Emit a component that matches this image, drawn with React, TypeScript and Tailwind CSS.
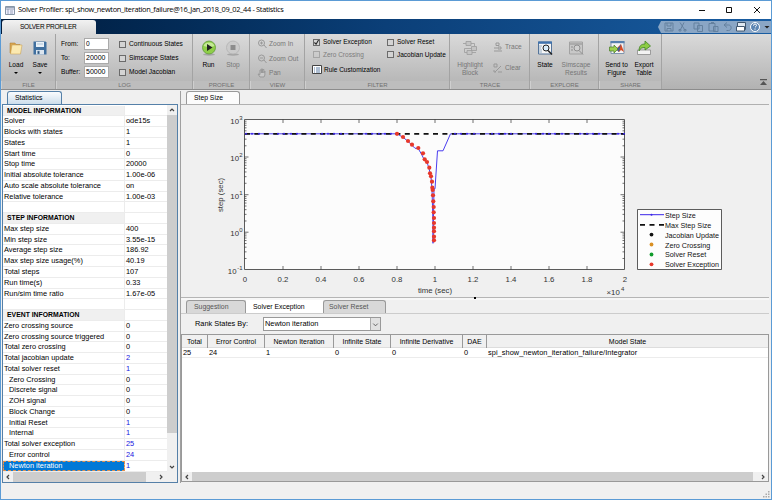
import type { ReactNode } from "react";

const modelRows: string[][] = [
  ["#MODEL INFORMATION", ""],
  ["Solver", "ode15s"],
  ["Blocks with states", "1"],
  ["States", "1"],
  ["Start time", "0"],
  ["Stop time", "20000"],
  ["Initial absolute tolerance", "1.00e-06"],
  ["Auto scale absolute tolerance", "on"],
  ["Relative tolerance", "1.00e-03"],
  ["", ""],
  ["#STEP INFORMATION", ""],
  ["Max step size", "400"],
  ["Min step size", "3.55e-15"],
  ["Average step size", "186.92"],
  ["Max step size usage(%)", "40.19"],
  ["Total steps", "107"],
  ["Run time(s)", "0.33"],
  ["Run/sim time ratio", "1.67e-05"],
  ["", ""],
  ["#EVENT INFORMATION", ""],
  ["Zero crossing source", "0"],
  ["Zero crossing source triggered", "0"],
  ["Total zero crossing", "0"],
  ["Total jacobian update", "2"],
  ["Total solver reset", "1"],
  [">Zero Crossing", "0"],
  [">Discrete signal", "0"],
  [">ZOH signal", "0"],
  [">Block Change", "0"],
  [">Initial Reset", "1"],
  [">Internal", "1"],
  ["Total solver exception", "25"],
  [">Error control", "24"],
  [">Newton iteration", "1"],
];

const exceptions = [
  [397, 133.8], [403, 137], [408, 141], [412, 144.7], [418.3, 148], [423, 153.3],
  [424.7, 159.3], [427, 162], [429.3, 167.7], [430, 173.3], [431, 176.3], [432, 181.7],
  [432.3, 187.7], [432.7, 190], [433, 195.3], [433.3, 201.3], [433.7, 207], [433.7, 212.3],
  [434, 218], [434, 223], [434, 227.7], [434, 231.3], [434, 236.7], [434, 240.3],
];

const stepMarks = [246, 252, 259, 278, 284, 291, 297, 322, 328, 334, 341, 366, 372, 379, 385, 391, 455, 461, 467, 474, 492, 499, 505, 511, 536, 543, 549, 555, 562, 580, 587, 593, 599, 618, 624];

function Section({ width, label, children }: { width: string; label: string; children?: ReactNode }) {
  return (
    <div className={`${width} shrink-0 flex flex-col border-r border-[#a3a3a3]`}>
      <div className="h-[46px] flex">{children}</div>
      <div className="h-[8px] mt-px bg-[#bdbdbd] border-l border-[#cfcfcf] text-center text-[6px] leading-[8px] text-[#707070]">
        {label}
      </div>
    </div>
  );
}

function Check({ label, on, off }: { label: string; on?: boolean; off?: boolean }) {
  return (
    <div className={`flex items-center gap-[3px] h-full ${off ? "text-[#7c7c7c]" : ""}`}>
      <span className={`w-[7px] h-[7px] border shrink-0 ${off ? "border-[#a5a5a5]" : "border-[#6b6b6b] bg-[#d4d4d4]"}`}>
        {on && (
          <svg viewBox="0 0 6 6" className="w-[5px] h-[5px]" fill="none" stroke="#222" strokeWidth="1.3">
            <path d="M.5 3l2 2 3-5" />
          </svg>
        )}
      </span>
      {label}
    </div>
  );
}

function BigButton({ width, icon, label, arrow, off }: { width: string; icon: ReactNode; label: string[]; arrow?: boolean; off?: boolean }) {
  return (
    <div className={`${width} shrink-0 flex flex-col items-center pt-[6px] ${off ? "text-[#777]" : ""}`}>
      <svg viewBox="0 0 16 16" className="w-[16px] h-[16px] mb-[5px] shrink-0">{icon}</svg>
      {label.map((l) => (
        <span key={l} className="leading-[8px] whitespace-nowrap">{l}</span>
      ))}
      {arrow && <span className="mt-[3px] border-x-[2.5px] border-t-[2.5px] border-x-transparent border-t-black" />}
    </div>
  );
}

function SmallButton({ icon, label }: { icon: ReactNode; label: string }) {
  return (
    <div className="flex items-center gap-[2px] text-[#777]">
      <svg viewBox="0 0 10 10" className="w-[10px] h-[10px]" fill="none" stroke="#999" strokeWidth="1">{icon}</svg>
      {label}
    </div>
  );
}

const folderIcon = (
  <>
    <path d="M2 3h5l1 1.5h4V13H2z" fill="#d9a651" stroke="#a8792c" strokeWidth=".5" />
    <path d="M4 5h10l-1.5 9H2.5z" fill="#fbe9b0" stroke="#c59a4a" strokeWidth=".5" />
  </>
);

const saveIcon = (
  <>
    <path d="M1.500 1.500h12l1 1v12h-13z" fill="#3f6f9f" />
    <path d="M4 2h8v5H4z" fill="#e9f1f8" />
    <path d="M4 10h8v4.500H4z" fill="#dce5ee" />
    <path d="M5.500 11h2v3h-2zM5 4h6" fill="#2c5179" stroke="#8aa7c3" strokeWidth=".6" />
  </>
);

const runIcon = (
  <>
    <ellipse cx="8" cy="14.500" rx="6" ry="1.200" fill="#8c8c8c" opacity=".6" />
    <circle cx="8" cy="7.500" r="6.500" fill="#8fce48" stroke="#5f9c38" strokeWidth=".8" />
    <path d="M2.500 6a5.800 5 0 0 1 11 0q-5 2-11 0z" fill="#d2f0aa" opacity=".8" />
    <path d="M6 4l5.500 3.500L6 11z" fill="#222" />
  </>
);

const stopIcon = (
  <>
    <ellipse cx="8" cy="14.500" rx="6" ry="1.200" fill="#a5a5a5" />
    <circle cx="8" cy="7.500" r="6.500" fill="#cbcbcb" stroke="#b2b2b2" strokeWidth=".8" />
    <path d="M5.500 5h5v5h-5z" fill="#8c8c8c" />
  </>
);

const highlightIcon = (
  <g fill="#c4c4c4" stroke="#9c9c9c" strokeWidth=".8">
    <path d="M1 3.500h3M9 3.500h3.500V6M9 12.500h5M2.500 8.500h7M2.500 8.500v4H5" fill="none" />
    <path d="M4 1.500h5v4H4zM9.500 6.500h5v4h-5zM5 10.500h5v4H5z" />
  </g>
);

const stateIcon = (
  <>
    <path d="M1.500 2h13v12h-13z" fill="#f6f6f6" stroke="#54749a" />
    <path d="M1 1.500h14v2.300H1z" fill="#3f72ad" />
    <path d="M2 6h3M2 8h2M2 10h3M2 12h3" stroke="#6f8fb0" strokeWidth=".7" />
    <circle cx="9" cy="8" r="3" fill="#d8ecfa" stroke="#222" />
    <path d="M11 10.500l4 4" stroke="#222" strokeWidth="1.600" />
  </>
);

const resultsIcon = (
  <>
    <path d="M1.500 2h13v12h-13z" fill="#c8c8c8" stroke="#a2a2a2" />
    <circle cx="9" cy="8" r="3" fill="#d0d0d0" stroke="#8f8f8f" />
    <path d="M11 10.500l4 4M2 4h12M3 7h2M3 10h2" stroke="#8f8f8f" />
  </>
);

const figureIcon = (
  <>
    <path d="M2 1.500h13v12H2z" fill="#f4f4f4" stroke="#8095ad" />
    <path d="M1.500 1h14v2.200h-14z" fill="#557fae" />
    <path d="M7 9l5-5 3 8-3-2-2 2z" fill="#d84b24" />
    <path d="M7 9l3-2 2-3-2 8z" fill="#3b5f9b" />
    <path d="M.5 7H5V5l4 4-4 4v-2H.500z" fill="#9dcf52" stroke="#467d24" strokeWidth=".7" />
  </>
);

const exportIcon = (
  <>
    <path d="M1.500 10h13v4.500h-13z" fill="#f3f3f3" stroke="#8a8a8a" strokeWidth=".8" />
    <path d="M3 11C3 6 5 4 9 4V1l5.500 5L9 10V7.500C6 7.500 4.500 8 3 11z" fill="#8dcc45" stroke="#3f8126" strokeWidth=".8" />
  </>
);

function QuickAccess() {
  return (
    <svg viewBox="0 0 114 14" className="w-[114px] h-[14px] shrink-0">
      <path d="M4 1h110v12H4L1 7z" fill="#8aa6c5" />
      <g fill="none" stroke="#64819f" strokeWidth="1">
        <path d="M8 3h8v8H8zM10 3v3h4V3M10 11V8.500h4V11" />
        <path d="M27 2.500l-3.500 7M23 2.500l4.500 7M22 9.500h2v1.500h-2zM27 9.500h2v1.500h-2z" />
        <path d="M37 3h5v6h-5zM40.500 5.500h5v6h-5z" />
        <path d="M52 3.500h6v7.500H52zM54 2.500h3M56.500 6.500h4.500v5h-4.500z" />
        <path d="M70 2.500l-3 2.500 3 2.500M67 5h4.500c3.500 0 3.500 5.500 0 5.500h-2" />
      </g>
      <path d="M80.500 2.500h8v7h-8z" fill="#dfe8f1" stroke="#41576f" />
      <path d="M79.500 6.500h8v4.500h-8z" fill="#fff" stroke="#41576f" />
      <circle cx="98" cy="7" r="4.500" fill="#5d86b3" stroke="#fff" />
      <path d="M96.500 5.700q0-1.700 1.500-1.700t1.500 1.400q0 .8-1.500 1.900M98 8.500v1.200" fill="none" stroke="#fff" strokeWidth="1" />
      <path d="M107.500 6h5l-2.500 2.500z" fill="#222" />
    </svg>
  );
}

function Toolstrip() {
  return (
    <div className="h-[56px] flex text-[6.600px] bg-linear-to-b from-[#dadada] to-[#b2b2b2] border-b border-[#8c8c8c]">
      <Section width="w-[55px]" label="FILE">
        <BigButton width="w-[30px]" icon={folderIcon} label={["Load"]} arrow />
        <BigButton width="w-[18px]" icon={saveIcon} label={["Save"]} arrow />
      </Section>
      <Section width="w-[137px]" label="LOG">
        <div className="grid grid-cols-[23px_35px_1fr] auto-rows-[14px] items-center pt-[3px] pl-[5px] h-[45px]">
          <span>From:</span>
          <span className="w-[25px] h-[12px] bg-white border border-[#aaa] leading-[10px] pl-px">0</span>
          <Check label="Continuous States" />
          <span>To:</span>
          <span className="w-[25px] h-[12px] bg-white border border-[#aaa] leading-[10px] pl-px text-[7px]">20000</span>
          <Check label="Simscape States" />
          <span>Buffer:</span>
          <span className="w-[25px] h-[12px] bg-white border border-[#aaa] leading-[10px] pl-px text-[7px]">50000</span>
          <Check label="Model Jacobian" />
        </div>
      </Section>
      <Section width="w-[57px]" label="PROFILE">
        <BigButton width="w-[31px]" icon={runIcon} label={["Run"]} />
        <BigButton width="w-[18px]" icon={stopIcon} label={["Stop"]} off />
      </Section>
      <Section width="w-[55px]" label="VIEW">
        <div className="flex flex-col gap-[4.500px] pt-[5px] pl-[7px]">
          <SmallButton label="Zoom In" icon={<path d="M7.500 4a3 3 0 1 1-6 0 3 3 0 1 1 6 0M7 6l2.500 3M3 4h3M4.500 2.500v3" />} />
          <SmallButton label="Zoom Out" icon={<path d="M7.500 4a3 3 0 1 1-6 0 3 3 0 1 1 6 0M7 6l2.500 3M3 4h3" />} />
          <SmallButton label="Pan" icon={<path d="M3 9L1 6l2 .5V2h1.300v3V1h1.300v4V1.500h1.300V5l1-2v4L7 9z" fill="#c8c8c8" />} />
        </div>
      </Section>
      <Section width="w-[145px]" label="FILTER">
        <div className="pl-[8px] pt-[2px] text-[6.500px]">
          <div className="grid grid-cols-[74px_1fr] auto-rows-[12.500px]">
            <Check label="Solver Exception" on />
            <Check label="Solver Reset" />
            <Check label="Zero Crossing" off />
            <Check label="Jacobian Update" />
          </div>
          <div className="flex items-center gap-[2px] -ml-px mt-px h-[15px]">
            <svg viewBox="0 0 10 9" className="w-[10px] h-[9px]">
              <path d="M.5.5h9v8h-9z" fill="#fff" stroke="#444" />
              <path d="M2 3h1M4 3h4M2 5h1M4 5h4M2 7h1M4 7h4" stroke="#355e91" strokeWidth=".8" />
            </svg>
            Rule Customization
          </div>
        </div>
      </Section>
      <Section width="w-[80px]" label="TRACE">
        <BigButton width="w-[40px]" icon={highlightIcon} label={["Highlight", "Block"]} off />
        <div className="flex flex-col gap-[11px] pt-[8px] pl-[3px]">
          <SmallButton label="Trace" icon={<path d="M3 1h3v2.500H3zM5 5h3v2H5zM1 6h3M1 9h8" />} />
          <SmallButton label="Clear" icon={<path d="M1 1h3v3H1zM2 9l6-6M5 9h4M1 7v2h2" />} />
        </div>
      </Section>
      <Section width="w-[69px]" label="EXPLORE">
        <BigButton width="w-[30px]" icon={stateIcon} label={["State"]} />
        <BigButton width="w-[32px]" icon={resultsIcon} label={["Simscape", "Results"]} off />
      </Section>
      <Section width="w-[63px]" label="SHARE">
        <BigButton width="w-[35px]" icon={figureIcon} label={["Send to", "Figure"]} />
        <BigButton width="w-[20px]" icon={exportIcon} label={["Export", "Table"]} />
      </Section>
      <div className="flex-1 flex items-end justify-end pr-[4px] pb-[4px]">
        <svg viewBox="0 0 7 6" className="w-[7px] h-[6px]">
          <path d="M0 0h7v1.200H0zM3.500 2L7 6H0z" fill="#555" />
        </svg>
      </div>
    </div>
  );
}

function Arrow({ d }: { d: string }) {
  return (
    <svg viewBox="0 0 10 10" className="w-[10px] h-[10px] shrink-0 bg-[#f0f0f0]" fill="none" stroke="#444" strokeWidth="1.200">
      <path d={d} />
    </svg>
  );
}

const arrows = {
  up: "M3 6l2-2 2 2",
  down: "M3 4l2 2 2-2",
  left: "M6 3L4 5l2 2",
  right: "M4 3l2 2-2 2",
};

function Statistics() {
  return (
    <div className="w-[177px] flex flex-col pl-px shrink-0">
      <div className="h-[13px] pl-[5px]">
        <div className="w-[55px] h-[14px] border border-b-0 border-[#5580a8] rounded-t-[3px] bg-linear-to-b from-[#fafcfe] to-[#c9dbea] pl-[7px] text-[6.900px] leading-[12px]">
          Statistics
        </div>
      </div>
      <div className="h-[379px] border border-[#5580a8] bg-white flex flex-col">
        <div className="h-[367px] flex">
          <div className="w-[164px] text-[7.400px] pt-[.5px]">
            {modelRows.map(([name, value], i) => {
              const head = name[0] === "#";
              const sub = name[0] === ">";
              const selected = i === modelRows.length - 1;
              const blue = i > 22 && value !== "0";
              return (
                <div key={i} className="h-[10.780px] leading-[10.780px] flex border-b border-[#ececec] whitespace-nowrap">
                  <span
                    className={`w-[122px] shrink-0 border-r border-[#ececec] ${
                      head ? "bg-[#f0f0f0] font-bold text-[6.850px] pl-[4px]" : sub ? "pl-[6px]" : "pl-px"
                    } ${selected ? "bg-[#0078d7] text-white outline-1 outline-dashed -outline-offset-1 outline-[#e09050]" : ""}`}
                  >
                    {name.replace(/^[#>]/, "")}
                  </span>
                  <span className={`pl-px ${blue ? "text-[#1515e0]" : ""}`}>{value}</span>
                </div>
              );
            })}
          </div>
          <div className="w-[10px] bg-[#cdcdcd] flex flex-col shrink-0">
            <Arrow d={arrows.up} />
            <div className="flex-1" />
            <div className="h-[29px] bg-[#f0f0f0]" />
            <Arrow d={arrows.down} />
          </div>
        </div>
        <div className="h-[10px] flex bg-[#f0f0f0]">
          <Arrow d={arrows.left} />
          <div className="w-[133px] bg-[#cdcdcd]" />
          <div className="w-[10px]" />
          <Arrow d={arrows.right} />
        </div>
      </div>
    </div>
  );
}

const decades = [119.5, 157, 194.7, 232.2];

function StepChart() {
  const minors = decades.flatMap((top) => [2, 3, 4, 5, 6, 7, 8, 9].map((n) => top + 37.6 * (1 - Math.log10(n))));
  return (
    <svg viewBox="181 105 587 192" className="w-[587px] h-[192px] font-['Liberation_Sans'] text-[7.800px]" fill="#333">
      <path d="M244.500 119.500h380V269.500h-380z" fill="#fcfcfc" stroke="#333" strokeWidth=".8" />
      <g stroke="#333" strokeWidth=".7">
        {[283, 321, 359, 397, 435, 473, 511, 549, 587].map((x) => (
          <path key={x} d={`M${x} 119.500v3.500M${x} 269.500v-3.500`} />
        ))}
        {decades.slice(1).map((y) => (
          <path key={y} d={`M244.500 ${y}h4M624.500 ${y}h-4`} />
        ))}
        {minors.map((y) => (
          <path key={y} d={`M244.500 ${y}h2M624.500 ${y}h-2`} />
        ))}
      </g>
      <path
        d="M245 133.800H397l6 3.500 5 4 4 4 3 3h3l3 5 3 6 3 3 2 6 2 9 1 12 1 35v19l1-54.500h1l2.500-38h5.500l7.500-17H625"
        fill="none"
        stroke="#4a3df0"
        strokeWidth="1"
      />
      <path d="M245 133.800H625" stroke="#111" strokeWidth="1.700" strokeDasharray="5 4.400" />
      {stepMarks.map((x) => (
        <circle key={x} cx={x} cy="133.800" r="1" fill="#3a25e8" />
      ))}
      {exceptions.map(([x, y], i) => (
        <circle key={i} cx={x} cy={y} r="2.100" fill="#e8382a" />
      ))}
      <g textAnchor="end">
        {[3, 2, 1, 0].map((p, i) => (
          <g key={p}>
            <text x="239" y={123.500 + i * 37.600}>10</text>
            <text x="242.500" y={119.500 + i * 37.600} className="text-[6px]">{p}</text>
          </g>
        ))}
        <text x="236.500" y="274">10</text>
        <text x="242.500" y="270" className="text-[6px]">-1</text>
      </g>
      <g textAnchor="middle">
        {["0", "0.2", "0.4", "0.6", "0.8", "1", "1.2", "1.4", "1.6", "1.8", "2"].map((l, i) => (
          <text key={l} x={245 + i * 38} y="281.500">{l}</text>
        ))}
        <text x="435" y="293">time (sec)</text>
        <text transform="translate(223 195) rotate(-90)">step (sec)</text>
      </g>
      <text x="606.500" y="295">×10</text>
      <text x="621" y="291" className="text-[6px]">4</text>
      <path d="M637.500 209.500h84v60h-84z" fill="#fdfdfd" stroke="#333" strokeWidth=".8" />
      <path d="M640 214.700h24" stroke="#3a25e8" />
      <circle cx="651.500" cy="214.700" r="1" fill="#3a25e8" />
      <path d="M640 224.800h24" stroke="#111" strokeWidth="1.700" strokeDasharray="5 4.500" />
      <circle cx="651.500" cy="234.600" r="1.900" fill="#111" />
      <circle cx="651.500" cy="244.500" r="1.900" fill="#d99024" />
      <circle cx="651.500" cy="254.500" r="1.900" fill="#119c2c" />
      <circle cx="651.500" cy="264.300" r="1.900" fill="#e8382a" />
      <g className="text-[7.200px]" fill="#111">
        {["Step Size", "Max Step Size", "Jacobian Update", "Zero Crossing", "Solver Reset", "Solver Exception"].map((l, i) => (
          <text key={l} x="665" y={217.800 + i * 9.900}>{l}</text>
        ))}
      </g>
    </svg>
  );
}

function ExceptionTable() {
  const cols = "grid grid-cols-[26px_57px_69px_57px_72px_24px_1fr]";
  return (
    <div className="h-[148px] border border-[#999] bg-white flex flex-col">
      <div className={`${cols} h-[13px] bg-[#f0f0f0] text-center text-[7px] leading-[13px] border-b border-[#ddd]`}>
        {["Total", "Error Control", "Newton Iteration", "Infinite State", "Infinite Derivative", "DAE", "Model State"].map((h, i) => (
          <span key={h} className={i < 6 ? "border-r border-[#999]" : ""}>{h}</span>
        ))}
      </div>
      <div className={`${cols} h-[10px] text-[7.400px] leading-[9px] border-b border-[#ececec]`}>
        {["25", "24", "1", "0", "0", "0", "spi_show_newton_iteration_failure/Integrator"].map((v, i) => (
          <span key={i} className={`pl-px ${i === 6 ? "tracking-[0.05px]" : ""}`}>{v}</span>
        ))}
      </div>
      <div className="flex-1" />
      <div className="h-[9px] flex bg-[#f0f0f0] overflow-hidden">
        <Arrow d={arrows.left} />
        <div className="flex-1 bg-[#cdcdcd]" />
        <div className="w-[5px]" />
        <Arrow d={arrows.right} />
      </div>
    </div>
  );
}

function Results() {
  return (
    <div className="flex-1 flex flex-col border-l border-[#a0a0a0] ml-[2px] mr-[2px]">
      <div className="h-[14px] pl-[5px] flex border-b border-[#b0b0b0]">
        <div className="w-[54px] h-[13px] border border-b-0 border-[#999] rounded-t-[3px] bg-[#fcfcfc] pl-[7px] text-[6.800px] leading-[12px]">
          Step Size
        </div>
      </div>
      <StepChart />
      <div className="h-[3px] border-t border-[#b5b5b5] bg-[#f7f7f7]">
        <div className="w-[2px] h-[2px] bg-black ml-[293px] -mt-px" />
      </div>
      <div className="h-[14px] pl-[5px] flex border-b border-[#ccc] text-[6.900px] leading-[12px]">
        <div className="w-[60px] border border-b-0 border-[#999] rounded-t-[3px] bg-[#d8d8d8] pl-[7px] text-[#555]">Suggestion</div>
        <div className="w-[77px] bg-white pl-[7px] pt-px">Solver Exception</div>
        <div className="w-[63px] border border-b-0 border-[#999] rounded-t-[3px] bg-[#d8d8d8] pl-[5px] text-[#555]">Solver Reset</div>
      </div>
      <div className="h-[20px] flex items-center pl-[14px] text-[7.400px]">
        <span className="w-[68px]">Rank States By:</span>
        <div className="w-[118px] h-[14px] border border-[#999] bg-white flex items-center justify-between pl-px">
          Newton iteration
          <span className="w-[10px] h-[12px] bg-[#e1e1e1] border-l border-[#aaa] flex items-center">
            <svg viewBox="0 0 10 10" className="w-[9px] h-[9px]" fill="none" stroke="#555"><path d="M2.500 4L5 6.500 7.500 4" /></svg>
          </span>
        </div>
      </div>
      <ExceptionTable />
    </div>
  );
}

function App() {
  return (
    <div className="w-[772px] h-[500px] overflow-hidden flex flex-col border border-[#5b9bd5] bg-[#f0f0f0] text-black font-['Liberation_Sans',sans-serif]">
      <div className="h-[18px] bg-white flex items-center shrink-0">
        <svg viewBox="0 0 10 9" className="w-[10px] h-[9px] ml-[4px] mr-[3px]">
          <path d="M.5.5h9v8h-9z" fill="#eef" stroke="#8796a8" />
          <path d="M1 1.500h8M1 3h8M3 3v5M5 5h3M5 7h3" stroke="#8090a5" strokeWidth=".8" />
        </svg>
        <span className="font-['Open_Sans'] text-[7.400px] tracking-[-0.310px] flex-1 whitespace-nowrap">
          Solver Profiler: spi_show_newton_iteration_failure@16_Jan_2018_09_02_44 - Statistics
        </span>
        <svg viewBox="0 0 64 8" className="w-[64px] h-[8px] mr-[9px]" fill="none" stroke="#111" strokeWidth="1">
          <path d="M1 4.500h6M28.500 1.500h5v5h-5zM56 1l6 6M62 1l-6 6" />
        </svg>
      </div>
      <div className="h-[15px] flex items-end justify-between bg-linear-to-r from-[#001b3c] via-[#0b3f78] to-[#195da2] shrink-0">
        <div className="w-[94px] h-[14px] ml-px rounded-t-[3px] bg-linear-to-b from-[#f2f2f2] to-[#dadada] text-[6.500px] tracking-[-0.250px] leading-[14px] pl-[18px]">
          SOLVER PROFILER
        </div>
        <QuickAccess />
      </div>
      <Toolstrip />
      <div className="h-[392px] mt-px flex shrink-0">
        <Statistics />
        <Results />
      </div>
      <div className="flex-1 flex items-end justify-end">
        <svg viewBox="0 0 8 8" className="w-[8px] h-[8px]" fill="#aaa">
          <path d="M5 0h1.500v1.500H5zM2.500 2.500H4V4H2.500zM5 2.500h1.500V4H5zM0 5h1.500v1.500H0zM2.500 5H4v1.500H2.500zM5 5h1.500v1.500H5z" />
        </svg>
      </div>
    </div>
  );
}

export default App;
